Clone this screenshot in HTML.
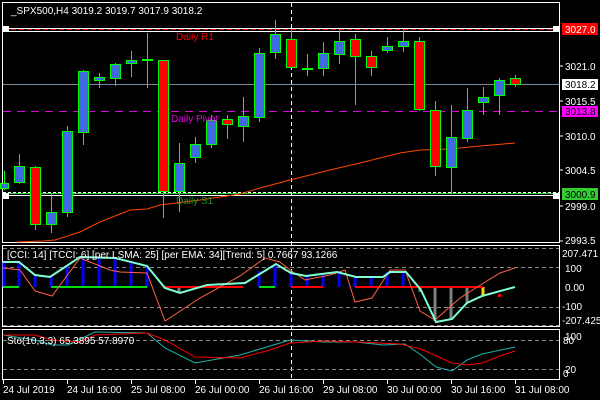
<!DOCTYPE html>
<html><head><meta charset="utf-8"><style>
html,body{margin:0;padding:0;background:#000;width:600px;height:400px;overflow:hidden}
svg{display:block}
text{font-family:"Liberation Sans",sans-serif;font-size:10px}
</style></head><body>
<svg width="600" height="400" viewBox="0 0 600 400" xmlns="http://www.w3.org/2000/svg">
<rect width="600" height="400" fill="#000"/>
<!-- panel borders -->
<g fill="none" stroke="#fff" stroke-width="1">
<rect x="2.5" y="2.5" width="557" height="240"/>
<rect x="2.5" y="245.5" width="557" height="81"/>
<rect x="2.5" y="329.5" width="557" height="50"/>
</g>
<!-- price levels -->
<line x1="3" y1="28.5" x2="559" y2="28.5" stroke="#fff"/>
<line x1="3" y1="31.5" x2="559" y2="31.5" stroke="#fff"/>
<line x1="3" y1="29.5" x2="559" y2="29.5" stroke="#f00" stroke-dasharray="5,3"/>
<line x1="3" y1="84.5" x2="559" y2="84.5" stroke="#778899"/>
<line x1="3" y1="111.5" x2="559" y2="111.5" stroke="#e000e0" stroke-dasharray="8,6"/>
<line x1="3" y1="192.5" x2="559" y2="192.5" stroke="#fff" stroke-dasharray="3,2"/>
<line x1="3" y1="193.5" x2="559" y2="193.5" stroke="#32cd32"/>
<line x1="3" y1="195.5" x2="559" y2="195.5" stroke="#fff"/>
<rect x="2" y="26" width="7" height="6" fill="#fff"/>
<rect x="2" y="193" width="7" height="6" fill="#fff"/>
<rect x="553" y="26" width="7" height="6" fill="#fff"/>
<rect x="553" y="193" width="7" height="6" fill="#fff"/>
<!-- vertical dashed -->
<line x1="291.5" y1="3" x2="291.5" y2="379" stroke="#fff" stroke-dasharray="4,3"/>
<!-- MA -->
<polyline fill="none" stroke="#ff4500" stroke-width="1" points="17,242 43,241 55,240 80,232 100,222 130,210 147,209 160,205 200,200 240,194 260,188 290,180 330,170 360,163 400,153 420,150 450,149 480,146 515,143"/>
<!-- candles -->
<g stroke="#00ff00" stroke-width="1">
<line x1="4.5" y1="171" x2="4.5" y2="190"/><rect x="0.5" y="183.5" width="8" height="5" fill="#4169e1"/>
<line x1="19.5" y1="154" x2="19.5" y2="184"/><rect x="14.5" y="166.5" width="10" height="16" fill="#4169e1"/>
<line x1="35.5" y1="166" x2="35.5" y2="230"/><rect x="30.5" y="167.5" width="10" height="57" fill="#f00"/>
<line x1="51.5" y1="194" x2="51.5" y2="233"/><rect x="46.5" y="212.5" width="10" height="12" fill="#4169e1"/>
<line x1="67.5" y1="126" x2="67.5" y2="217"/><rect x="62.5" y="131.5" width="10" height="81" fill="#4169e1"/>
<line x1="83.5" y1="70" x2="83.5" y2="145"/><rect x="78.5" y="71.5" width="10" height="61" fill="#4169e1"/>
<line x1="99.5" y1="73" x2="99.5" y2="88"/><rect x="94.5" y="77.5" width="10" height="3" fill="#4169e1"/>
<line x1="115.5" y1="63" x2="115.5" y2="86"/><rect x="110.5" y="64.5" width="10" height="14" fill="#4169e1"/>
<line x1="131.5" y1="51" x2="131.5" y2="77"/><rect x="126.5" y="60.5" width="10" height="3" fill="#4169e1"/>
<line x1="147.5" y1="33" x2="147.5" y2="88"/><line x1="142" y1="60" x2="153" y2="60" stroke-width="2"/>
<line x1="163.5" y1="60" x2="163.5" y2="218"/><rect x="158.5" y="60.5" width="10" height="131" fill="#f00"/>
<line x1="179.5" y1="143" x2="179.5" y2="212"/><rect x="174.5" y="163.5" width="10" height="28" fill="#4169e1"/>
<line x1="195.5" y1="137" x2="195.5" y2="163"/><rect x="190.5" y="144.5" width="10" height="13" fill="#4169e1"/>
<line x1="211.5" y1="115" x2="211.5" y2="148"/><rect x="206.5" y="120.5" width="10" height="24" fill="#4169e1"/>
<line x1="227.5" y1="115" x2="227.5" y2="139"/><rect x="222.5" y="119.5" width="10" height="5" fill="#f00"/>
<line x1="243.5" y1="97" x2="243.5" y2="142"/><rect x="238.5" y="116.5" width="10" height="10" fill="#4169e1"/>
<line x1="259.5" y1="48" x2="259.5" y2="122"/><rect x="254.5" y="53.5" width="10" height="64" fill="#4169e1"/>
<line x1="275.5" y1="20" x2="275.5" y2="59"/><rect x="270.5" y="34.5" width="10" height="18" fill="#4169e1"/>
<line x1="291.5" y1="30" x2="291.5" y2="67"/><rect x="286.5" y="39.5" width="10" height="28" fill="#f00"/>
<line x1="307.5" y1="54" x2="307.5" y2="76"/><line x1="302" y1="69" x2="313" y2="69" stroke-width="2"/>
<line x1="323.5" y1="42" x2="323.5" y2="76"/><rect x="318.5" y="53.5" width="10" height="15" fill="#4169e1"/>
<line x1="339.5" y1="30" x2="339.5" y2="64"/><rect x="334.5" y="41.5" width="10" height="13" fill="#4169e1"/>
<line x1="355.5" y1="34" x2="355.5" y2="105"/><rect x="350.5" y="39.5" width="10" height="17" fill="#f00"/>
<line x1="371.5" y1="51" x2="371.5" y2="76"/><rect x="366.5" y="56.5" width="10" height="11" fill="#f00"/>
<line x1="387.5" y1="37" x2="387.5" y2="53"/><rect x="382.5" y="46.5" width="10" height="4" fill="#4169e1"/>
<line x1="403.5" y1="30" x2="403.5" y2="52"/><rect x="398.5" y="41.5" width="10" height="5" fill="#4169e1"/>
<line x1="419.5" y1="37" x2="419.5" y2="111"/><rect x="414.5" y="41.5" width="10" height="68" fill="#f00"/>
<line x1="435.5" y1="101" x2="435.5" y2="176"/><rect x="430.5" y="110.5" width="10" height="56" fill="#f00"/>
<line x1="451.5" y1="105" x2="451.5" y2="194"/><rect x="446.5" y="137.5" width="10" height="30" fill="#4169e1"/>
<line x1="467.5" y1="88" x2="467.5" y2="142"/><rect x="462.5" y="110.5" width="10" height="28" fill="#4169e1"/>
<line x1="483.5" y1="87" x2="483.5" y2="115"/><rect x="478.5" y="97.5" width="10" height="5" fill="#4169e1"/>
<line x1="499.5" y1="78" x2="499.5" y2="115"/><rect x="494.5" y="80.5" width="10" height="15" fill="#4169e1"/>
<line x1="515.5" y1="75" x2="515.5" y2="87"/><rect x="510.5" y="78.5" width="10" height="6" fill="#f00"/>
</g>
<!-- main text -->
<text x="11" y="14" fill="#fff">_SPX500,H4  3019.2 3019.7 3017.9 3018.2</text>
<text x="176" y="40" fill="#f00">Daily R1</text>
<text x="171" y="122" fill="#e000e0">Daily Pivot</text>
<text x="176" y="204" fill="#228b22">Daily S1</text>
<!-- right axis labels -->
<g fill="#fff">
<rect x="562" y="23" width="36" height="12" fill="#f00"/>
<text x="565" y="33">3027.0</text>
<text x="565" y="70">3021.0</text>
<rect x="562" y="79" width="36" height="11" fill="#fff"/>
<text x="565" y="88" fill="#000">3018.2</text>
<text x="565" y="105">3015.5</text>
<rect x="562" y="106" width="36" height="11" fill="#f0f"/>
<text x="565" y="115" fill="#000">3013.8</text>
<text x="565" y="140">3010.0</text>
<text x="565" y="174">3004.5</text>
<rect x="562" y="188" width="36" height="12" fill="#32cd32"/>
<text x="565" y="198" fill="#000">3000.9</text>
<text x="565" y="210">2999.0</text>
<text x="565" y="244">2993.5</text>
<text x="562" y="257">207.471</text>
<text x="565" y="272">100</text>
<text x="565" y="291">0.00</text>
<text x="562" y="310">-100</text>
<text x="562" y="324">-207.425</text>
<text x="565" y="340">100</text>
<text x="563" y="344">80</text>
<text x="565" y="373">20</text>
<text x="563" y="377">0</text>
</g>
<g stroke="#fff"><line x1="560" y1="66" x2="563" y2="66"/><line x1="560" y1="101" x2="563" y2="101"/><line x1="560" y1="136" x2="563" y2="136"/><line x1="560" y1="170" x2="563" y2="170"/><line x1="560" y1="206" x2="563" y2="206"/><line x1="560" y1="241" x2="563" y2="241"/></g>
<!-- CCI panel -->
<g stroke="#888" stroke-dasharray="4,3"><line x1="3" y1="248.5" x2="559" y2="248.5"/><line x1="3" y1="267.5" x2="559" y2="267.5"/><line x1="3" y1="307.5" x2="559" y2="307.5"/><line x1="3" y1="325.5" x2="559" y2="325.5"/></g>
<g stroke="#0000ff" stroke-width="3">
<line x1="4" y1="287" x2="4" y2="262"/><line x1="19" y1="287" x2="19" y2="263"/><line x1="35" y1="287" x2="35" y2="275"/><line x1="51" y1="287" x2="51" y2="277"/><line x1="67" y1="287" x2="67" y2="266"/><line x1="83" y1="287" x2="83" y2="256"/><line x1="99" y1="287" x2="99" y2="257"/><line x1="115" y1="287" x2="115" y2="258"/><line x1="131" y1="287" x2="131" y2="261"/><line x1="147" y1="287" x2="147" y2="266"/>
<line x1="259" y1="287" x2="259" y2="271"/><line x1="275" y1="287" x2="275" y2="264"/><line x1="291" y1="287" x2="291" y2="273"/><line x1="307" y1="287" x2="307" y2="276"/><line x1="323" y1="287" x2="323" y2="274"/><line x1="339" y1="287" x2="339" y2="272"/><line x1="355" y1="287" x2="355" y2="277"/><line x1="371" y1="287" x2="371" y2="277"/><line x1="387" y1="287" x2="387" y2="272"/><line x1="403" y1="287" x2="403" y2="272"/>
</g>
<g stroke="#808080" stroke-width="3"><line x1="179" y1="287" x2="179" y2="293"/><line x1="420" y1="287" x2="420" y2="292"/><line x1="435" y1="287" x2="435" y2="321"/><line x1="451" y1="287" x2="451" y2="319"/><line x1="467" y1="287" x2="467" y2="303"/></g>
<line x1="483" y1="287" x2="483" y2="296" stroke="#ffd700" stroke-width="3"/>
<rect x="498" y="294" width="3" height="3" fill="#f00"/>
<g stroke="#00e000" stroke-width="2"><line x1="3" y1="287" x2="19" y2="287"/><line x1="51" y1="287" x2="147" y2="287"/><line x1="259" y1="287" x2="275" y2="287"/></g>
<g stroke="#f00" stroke-width="2"><line x1="163" y1="287" x2="243" y2="287"/><line x1="291" y1="287" x2="323" y2="287"/><line x1="355" y1="287" x2="483" y2="287"/></g>
<polyline fill="none" stroke="#ff6347" stroke-width="1" points="3,268 20,270 35,291 52,296 80,258 110,270 120,272 147,273 165,321 200,298 240,276 265,258 280,262 290,270 305,280 330,275 345,270 355,302 372,298 390,270 405,270 420,311 435,320 460,298 482,284 500,273 515,268"/>
<polyline fill="none" stroke="#7fffd4" stroke-width="2" points="3,262 19,262 35,275 50,277 80,257 115,258 147,266 165,288 180,293 207,285 245,283 276,264 291,273 306,276 337,272 356,277 383,277 390,272 406,272 421,290 436,322 452,319 467,303 482,296 515,287"/>
<text x="7" y="258" fill="#fff">[CCI: 14] [TCCI: 6] [per LSMA: 25] [per EMA: 34][Trend: 5]  0.7667 93.1266</text>
<!-- Sto panel -->
<g stroke="#888" stroke-dasharray="4,3"><line x1="3" y1="340.5" x2="559" y2="340.5"/><line x1="3" y1="369.5" x2="559" y2="369.5"/></g>
<polyline fill="none" stroke="#20b2aa" stroke-width="1" points="3,335 35,340 52,345 68,345 95,332 147,333 165,348 195,363 240,355 270,346 290,340 307,341 323,342 356,342 383,345 405,344 421,355 436,367 452,371 467,360 482,354 515,347"/>
<polyline fill="none" stroke="#f00" stroke-width="1" points="3,335 35,335 52,340 80,342 95,335 147,333 165,340 195,357 240,358 270,350 290,343 323,341 356,342 400,344 421,349 452,363 467,365 482,363 500,356 515,351"/>
<text x="7" y="344" fill="#fff">Sto(10,3,3) 65.3895 57.8970</text>
<!-- time axis -->
<g stroke="#fff"><line x1="3.5" y1="380" x2="3.5" y2="384"/><line x1="67.5" y1="380" x2="67.5" y2="384"/><line x1="131.5" y1="380" x2="131.5" y2="384"/><line x1="195.5" y1="380" x2="195.5" y2="384"/><line x1="259.5" y1="380" x2="259.5" y2="384"/><line x1="323.5" y1="380" x2="323.5" y2="384"/><line x1="387.5" y1="380" x2="387.5" y2="384"/><line x1="451.5" y1="380" x2="451.5" y2="384"/><line x1="515.5" y1="380" x2="515.5" y2="384"/></g>
<g fill="#fff">
<text x="3" y="393">24 Jul 2019</text>
<text x="67" y="393">24 Jul 16:00</text>
<text x="131" y="393">25 Jul 08:00</text>
<text x="195" y="393">26 Jul 00:00</text>
<text x="259" y="393">26 Jul 16:00</text>
<text x="323" y="393">29 Jul 08:00</text>
<text x="387" y="393">30 Jul 00:00</text>
<text x="451" y="393">30 Jul 16:00</text>
<text x="515" y="393">31 Jul 08:00</text>
</g>
</svg>
</body></html>
